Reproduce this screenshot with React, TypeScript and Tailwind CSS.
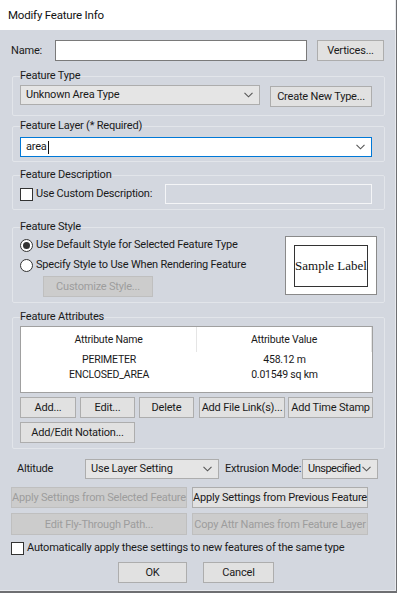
import React from 'react';
import clsx from 'clsx';

const Chevron = ({ className }: { className?: string }) => (
  <svg width="9" height="6" viewBox="0 0 9 6" className={className}>
    <path d="M0.5 0.8 L4.5 4.8 L8.5 0.8" fill="none" stroke="#555" strokeWidth="1.1" />
  </svg>
);

const Btn = ({
  children,
  className,
  disabled = false,
  primary = false,
}: {
  children: React.ReactNode;
  className?: string;
  disabled?: boolean;
  primary?: boolean;
}) => (
  <button
    className={clsx(
      'flex h-[21px] shrink-0 items-center justify-center border text-[11px] leading-none tracking-[-0.2px] whitespace-nowrap',
      disabled ? 'border-[#bfbfbf] bg-[#cccccc] text-[#9d9d9d]' : 'border-[#adadad] bg-[#e1e1e1] text-[#1a1a1a]',
      primary && 'border-[#0078d7]',
      className
    )}
  >
    {children}
  </button>
);

const DropDown = ({ value, className }: { value: string; className?: string }) => (
  <div
    className={clsx(
      'flex h-[20px] shrink-0 items-center justify-between border border-[#adadad] bg-[#e5e5e5] pl-[5px] pr-[6px] text-[#1a1a1a]',
      className
    )}
  >
    <span className="whitespace-nowrap">{value}</span>
    <Chevron />
  </div>
);

const CheckBox = () => <div className="h-[13px] w-[13px] shrink-0 border border-[#333] bg-white" />;

const Radio = ({ checked = false }: { checked?: boolean }) => (
  <div className="flex h-[13px] w-[13px] shrink-0 items-center justify-center rounded-full border border-[#333] bg-white">
    {checked && <div className="h-[7px] w-[7px] rounded-full bg-[#333]" />}
  </div>
);

const Group = ({
  title,
  className,
  children,
}: {
  title: string;
  className?: string;
  children: React.ReactNode;
}) => (
  <fieldset className={clsx('ml-[1px] w-[373px] rounded-[2px] border border-[#e2e5ea] px-[7px]', className)}>
    <legend className="leading-[16px] text-[#1a1a1a]">{title}</legend>
    {children}
  </fieldset>
);

export default function App() {
  return (
    <div className="h-[593px] w-[397px] bg-[#6e6f72] font-[Roboto,sans-serif] text-[11px] leading-[14px] tracking-[-0.2px]">
      <div className="flex h-[591px] w-[396px] flex-col border-r border-b border-[#e8eaee] bg-[#d3d7df]">
        {/* title bar */}
        <div className="flex h-[30px] shrink-0 items-center bg-white pl-[8px] text-[11.5px] text-[#111]">
          Modify Feature Info
        </div>

        <div className="flex flex-col px-[11px] pt-[10px] text-[#1a1a1a]">
          {/* name */}
          <div className="flex items-center">
            <span className="w-[44px]">Name:</span>
            <div className="h-[21px] w-[252px] border border-[#7a7a7a] bg-white" />
            <Btn className="ml-[10px] w-[67px]">Vertices...</Btn>
          </div>

          <Group title="Feature Type" className="mt-[7px] pb-[8px]">
            <div className="mt-[1px] flex items-start">
              <DropDown value="Unknown Area Type" className="w-[240px]" />
              <Btn className="mt-[1px] ml-[10px] h-[20px] w-[102px]">Create New Type...</Btn>
            </div>
          </Group>

          <Group title="Feature Layer (* Required)" className="mt-[2px] pb-[4px]">
            <div className="mt-[3px] flex h-[20px] w-[352px] items-center justify-between border border-[#0078d7] bg-white pl-[5px] pr-[6px]">
              <span className="flex items-center">
                area<span className="ml-[1px] inline-block h-[13px] w-[1px] bg-[#111]" />
              </span>
              <Chevron />
            </div>
          </Group>

          <Group title="Feature Description" className="mt-[5px] pb-[5px]">
            <div className="mt-[1px] flex items-center">
              <div className="flex w-[145px] items-center">
                <CheckBox />
                <span className="ml-[3px] whitespace-nowrap">Use Custom Description:</span>
              </div>
              <div className="h-[20px] w-[207px] border border-[#f4f5f7]" />
            </div>
          </Group>

          <Group title="Feature Style" className="mt-[9px] pb-[5px]">
            <div className="flex">
              <div className="flex flex-1 flex-col">
                <div className="flex h-[20px] items-center">
                  <Radio checked />
                  <span className="ml-[3px] whitespace-nowrap">Use Default Style for Selected Feature Type</span>
                </div>
                <div className="flex h-[20px] items-center">
                  <Radio />
                  <span className="ml-[3px] whitespace-nowrap">Specify Style to Use When Rendering Feature</span>
                </div>
                <Btn disabled className="mt-[1px] ml-[23px] h-[20px] w-[110px]">
                  Customize Style...
                </Btn>
              </div>
              <div className="mt-[1px] flex h-[59px] w-[92px] items-center justify-center border border-[#8a8a8a] bg-white">
                <div className="flex h-[42px] w-[74px] items-center justify-center border border-[#333] font-['Liberation_Serif',serif] text-[13px] tracking-normal text-[#111]">
                  Sample Label
                </div>
              </div>
            </div>
          </Group>

          <Group title="Feature Attributes" className="mt-[6px] pb-[5px]">
            <div className="mt-[1px] flex h-[67px] w-[353px] flex-col border border-[#a0a0a0] bg-white text-[10.5px]">
              <div className="flex h-[25px] shrink-0 items-center">
                <div className="flex h-full w-[176px] items-center justify-center border-r border-[#e5e5e5]">Attribute Name</div>
                <div className="flex h-full w-[175px] items-center justify-center border-r border-[#e5e5e5]">Attribute Value</div>
              </div>
              <div className="flex h-[15px] items-center">
                <div className="w-[176px] text-center">PERIMETER</div>
                <div className="w-[175px] text-center">458.12 m</div>
              </div>
              <div className="flex h-[15px] items-center">
                <div className="w-[176px] text-center">ENCLOSED_AREA</div>
                <div className="w-[175px] text-center">0.01549 sq km</div>
              </div>
            </div>
            <div className="mt-[4px] flex">
              <Btn className="w-[56px]">Add...</Btn>
              <Btn className="ml-[4px] w-[55px]">Edit...</Btn>
              <Btn className="ml-[4px] w-[55px]">Delete</Btn>
              <Btn className="ml-[5px] w-[86px]">Add File Link(s)...</Btn>
              <Btn className="ml-[3px] w-[85px]">Add Time Stamp</Btn>
            </div>
            <Btn className="mt-[4px] h-[20px] w-[115px]">Add/Edit Notation...</Btn>
          </Group>

          {/* altitude */}
          <div className="mt-[10px] flex items-center">
            <span className="ml-[6px] w-[68px]">Altitude</span>
            <DropDown value="Use Layer Setting" className="w-[134px]" />
            <span className="ml-[6px] w-[77px] whitespace-nowrap">Extrusion Mode:</span>
            <DropDown value="Unspecified" className="w-[76px] pl-[3px] pr-[5px] tracking-[-0.5px]" />
          </div>

          <div className="mt-[8px] flex">
            <Btn disabled className="w-[176px]">Apply Settings from Selected Feature</Btn>
            <Btn className="ml-[5px] w-[176px]">Apply Settings from Previous Feature</Btn>
          </div>
          <div className="mt-[5px] flex">
            <Btn disabled className="h-[22px] w-[176px]">Edit Fly-Through Path...</Btn>
            <Btn disabled className="ml-[5px] h-[22px] w-[176px]">Copy Attr Names from Feature Layer</Btn>
          </div>

          <div className="mt-[6px] flex items-center">
            <CheckBox />
            <span className="ml-[3px] whitespace-nowrap">
              Automatically apply these settings to new features of the same type
            </span>
          </div>

          <div className="mt-[7px] flex">
            <Btn primary className="ml-[107px] w-[69px]">OK</Btn>
            <Btn className="ml-[16px] w-[71px]">Cancel</Btn>
          </div>
        </div>
      </div>
    </div>
  );
}
